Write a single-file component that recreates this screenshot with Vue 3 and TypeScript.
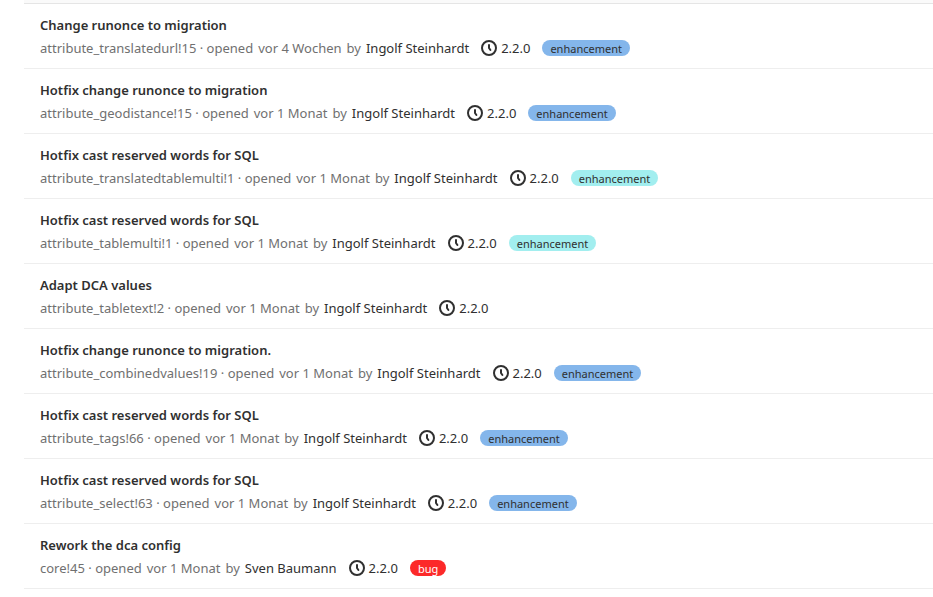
<script setup lang="ts">
interface Label {
  text: string
  kind: 'blue' | 'aqua' | 'red'
}

interface MergeRequest {
  title: string
  reference: string
  opened: string
  author: string
  milestone: string
  label?: Label
}

const blue: Label = { text: 'enhancement', kind: 'blue' }
const aqua: Label = { text: 'enhancement', kind: 'aqua' }
const ingolf = 'Ingolf Steinhardt'

const requests: MergeRequest[] = [
  { title: 'Change runonce to migration', reference: 'attribute_translatedurl!15', opened: 'vor 4 Wochen', author: ingolf, milestone: '2.2.0', label: blue },
  { title: 'Hotfix change runonce to migration', reference: 'attribute_geodistance!15', opened: 'vor 1 Monat', author: ingolf, milestone: '2.2.0', label: blue },
  { title: 'Hotfix cast reserved words for SQL', reference: 'attribute_translatedtablemulti!1', opened: 'vor 1 Monat', author: ingolf, milestone: '2.2.0', label: aqua },
  { title: 'Hotfix cast reserved words for SQL', reference: 'attribute_tablemulti!1', opened: 'vor 1 Monat', author: ingolf, milestone: '2.2.0', label: aqua },
  { title: 'Adapt DCA values', reference: 'attribute_tabletext!2', opened: 'vor 1 Monat', author: ingolf, milestone: '2.2.0' },
  { title: 'Hotfix change runonce to migration.', reference: 'attribute_combinedvalues!19', opened: 'vor 1 Monat', author: ingolf, milestone: '2.2.0', label: blue },
  { title: 'Hotfix cast reserved words for SQL', reference: 'attribute_tags!66', opened: 'vor 1 Monat', author: ingolf, milestone: '2.2.0', label: blue },
  { title: 'Hotfix cast reserved words for SQL', reference: 'attribute_select!63', opened: 'vor 1 Monat', author: ingolf, milestone: '2.2.0', label: blue },
  { title: 'Rework the dca config', reference: 'core!45', opened: 'vor 1 Monat', author: 'Sven Baumann', milestone: '2.2.0', label: { text: 'bug', kind: 'red' } },
]
</script>

<template>
  <main class="page">
    <div class="filter-edge"></div>
    <ul class="list">
      <li v-for="request in requests" :key="request.reference" class="request">
        <a href="#" class="title">{{ request.title }}</a>
        <div class="meta">
          <div class="info">
            <span>{{ request.reference }} · opened</span>
            <time>{{ request.opened }}</time>
            <span>by</span>
            <a href="#" class="author">{{ request.author }}</a>
          </div>
          <a href="#" class="milestone">
            <svg class="clock" viewBox="0 0 16 16" aria-hidden="true">
              <circle cx="8" cy="8" r="7" />
              <path d="M8 5v3l1.4 2" />
            </svg>
            <span>{{ request.milestone }}</span>
          </a>
          <a v-if="request.label" href="#" class="label" :class="request.label.kind">{{ request.label.text }}</a>
        </div>
      </li>
    </ul>
  </main>
</template>

<style>
body {
  margin: 0;
  background: #fff;
}
</style>

<style scoped>
.page {
  padding-left: 24px;
  font-family: "Noto Sans", "Open Sans", sans-serif;
  font-size: 13px;
  line-height: 20px;
  color: #303030;
}

.filter-edge {
  height: 3px;
  background: #fafafa;
  border-bottom: 1px solid #e5e5e5;
}

.list {
  margin: 0;
  padding: 0;
  list-style: none;
}

.request {
  display: flex;
  flex-direction: column;
  align-items: flex-start;
  gap: 3px;
  padding: 11px 16px 10px;
  border-bottom: 1px solid #eee;
}

a {
  color: inherit;
  text-decoration: none;
}

.title {
  font-weight: 600;
}

.meta {
  display: flex;
  align-items: center;
  gap: 12px;
  white-space: nowrap;
}

.info {
  display: flex;
  gap: 5px;
  color: #707070;
}

.info .author {
  color: #303030;
}

.milestone {
  display: flex;
  align-items: center;
  gap: 4px;
}

.clock {
  width: 16px;
  height: 16px;
  fill: none;
  stroke: #303030;
  stroke-width: 2;
  stroke-linecap: round;
  stroke-linejoin: round;
}

.label {
  padding: 1px 8px 0;
  border-radius: 8px;
  font-size: 11px;
  line-height: 15px;
}

.blue {
  background: #84b6eb;
}

.aqua {
  background: #a2eeef;
}

.red {
  background: #fc2929;
  color: #fff;
}
</style>
